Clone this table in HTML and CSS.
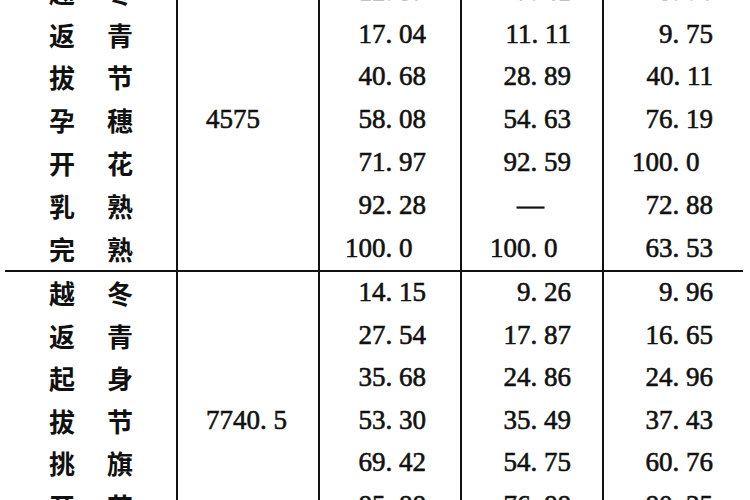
FILE: index.html
```html
<!DOCTYPE html>
<html lang="zh">
<head>
<meta charset="utf-8">
<title>生育期表</title>
<link rel="stylesheet" href="styles.css">
</head>
<body>
<div class="sheet">
  <div class="group g1">
    <div class="yield">4575</div>
    <div class="stage">越冬</div><div class="num c3">12<span class="pt">.</span>37</div><div class="num c4">7<span class="pt">.</span>41</div><div class="num c5">5<span class="pt">.</span>96</div>
    <div class="stage">返青</div><div class="num c3">17<span class="pt">.</span>04</div><div class="num c4">11<span class="pt">.</span>11</div><div class="num c5">9<span class="pt">.</span>75</div>
    <div class="stage">拔节</div><div class="num c3">40<span class="pt">.</span>68</div><div class="num c4">28<span class="pt">.</span>89</div><div class="num c5">40<span class="pt">.</span>11</div>
    <div class="stage">孕穗</div><div class="num c3">58<span class="pt">.</span>08</div><div class="num c4">54<span class="pt">.</span>63</div><div class="num c5">76<span class="pt">.</span>19</div>
    <div class="stage">开花</div><div class="num c3">71<span class="pt">.</span>97</div><div class="num c4">92<span class="pt">.</span>59</div><div class="num c5 one">100<span class="pt">.</span>0</div>
    <div class="stage">乳熟</div><div class="num c3">92<span class="pt">.</span>28</div><div class="num c4 dash">—</div><div class="num c5">72<span class="pt">.</span>88</div>
    <div class="stage">完熟</div><div class="num c3 one">100<span class="pt">.</span>0</div><div class="num c4 one">100<span class="pt">.</span>0</div><div class="num c5">63<span class="pt">.</span>53</div>
  </div>
  <div class="rule"></div>
  <div class="group g2">
    <div class="yield">7740<span class="pt">.</span>5</div>
    <div class="stage">越冬</div><div class="num c3">14<span class="pt">.</span>15</div><div class="num c4">9<span class="pt">.</span>26</div><div class="num c5">9<span class="pt">.</span>96</div>
    <div class="stage">返青</div><div class="num c3">27<span class="pt">.</span>54</div><div class="num c4">17<span class="pt">.</span>87</div><div class="num c5">16<span class="pt">.</span>65</div>
    <div class="stage">起身</div><div class="num c3">35<span class="pt">.</span>68</div><div class="num c4">24<span class="pt">.</span>86</div><div class="num c5">24<span class="pt">.</span>96</div>
    <div class="stage">拔节</div><div class="num c3">53<span class="pt">.</span>30</div><div class="num c4">35<span class="pt">.</span>49</div><div class="num c5">37<span class="pt">.</span>43</div>
    <div class="stage">挑旗</div><div class="num c3">69<span class="pt">.</span>42</div><div class="num c4">54<span class="pt">.</span>75</div><div class="num c5">60<span class="pt">.</span>76</div>
    <div class="stage">开花</div><div class="num c3">85<span class="pt">.</span>88</div><div class="num c4">76<span class="pt">.</span>88</div><div class="num c5">80<span class="pt">.</span>35</div>
    <div class="stage">乳熟</div><div class="num c3">96<span class="pt">.</span>02</div><div class="num c4">90<span class="pt">.</span>14</div><div class="num c5">92<span class="pt">.</span>47</div>
  </div>
</div>
</body>
</html>
```
FILE: styles.css
```css
html, body {
  margin: 0;
  padding: 0;
  background: #ffffff;
}
body {
  width: 750px;
  height: 500px;
  overflow: hidden;
  color: #111111;
}
.sheet {
  margin-top: -30px;
  width: 750px;
}
.group {
  display: grid;
  grid-template-columns: 176px 142px 142px 142px 1fr;
}
.g1 {
  grid-template-rows: repeat(7, 42.8px);
}
.g2 {
  grid-template-rows: repeat(7, 42.5px);
}
.rule {
  height: 2px;
  margin: 0 7px 0 5px;
  background: #111111;
}
.yield {
  grid-column: 2;
  grid-row: 1 / -1;
  border-left: 2px solid #111111;
  display: flex;
  align-items: center;
  padding-left: 28px;
  font-family: "Liberation Serif", serif;
  font-size: 27px;
  -webkit-text-stroke: 0.6px #111111;
}
.stage {
  display: flex;
  align-items: center;
  padding-left: 49px;
  font-family: "Noto Sans CJK SC", sans-serif;
  font-weight: 700;
  font-size: 26px;
  letter-spacing: 32px;
  white-space: nowrap;
}
.num {
  display: flex;
  align-items: center;
  justify-content: flex-end;
  border-left: 2px solid #111111;
  font-family: "Liberation Serif", serif;
  font-size: 27px;
  white-space: nowrap;
  -webkit-text-stroke: 0.6px #111111;
}
.pt {
  display: inline-block;
  width: 0.5em;
}
.c3 { padding-right: 34px; }
.c4 { padding-right: 31px; }
.c5 { padding-right: 37px; }
.c3.one { padding-right: calc(34px + 0.5em); }
.c4.one { padding-right: calc(31px + 0.5em); }
.c5.one { padding-right: calc(37px + 0.5em); }
.c4.dash { padding-right: 58px; }
```
